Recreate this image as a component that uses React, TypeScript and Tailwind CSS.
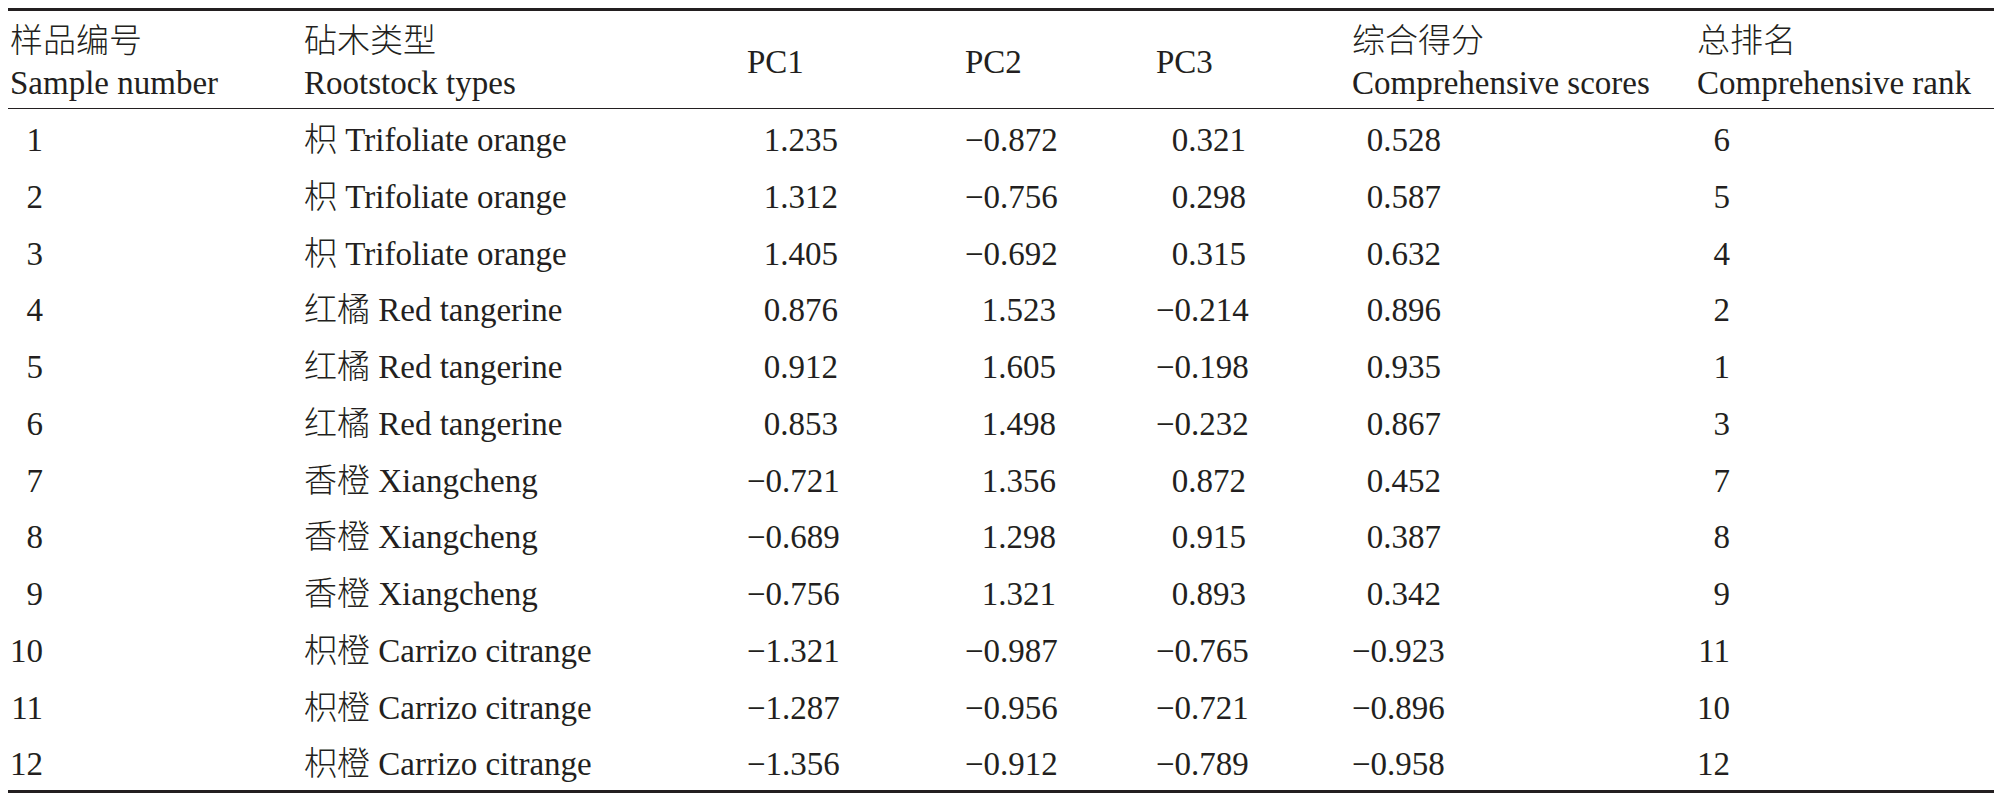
import React from "react"

type Row = {
  no: number
  zh: string
  en: string
  pc1: string
  pc2: string
  pc3: string
  score: string
  rank: number
}

const rows: Row[] = [
  { no: 1, zh: "枳", en: "Trifoliate orange", pc1: "1.235", pc2: "−0.872", pc3: "0.321", score: "0.528", rank: 6 },
  { no: 2, zh: "枳", en: "Trifoliate orange", pc1: "1.312", pc2: "−0.756", pc3: "0.298", score: "0.587", rank: 5 },
  { no: 3, zh: "枳", en: "Trifoliate orange", pc1: "1.405", pc2: "−0.692", pc3: "0.315", score: "0.632", rank: 4 },
  { no: 4, zh: "红橘", en: "Red tangerine", pc1: "0.876", pc2: "1.523", pc3: "−0.214", score: "0.896", rank: 2 },
  { no: 5, zh: "红橘", en: "Red tangerine", pc1: "0.912", pc2: "1.605", pc3: "−0.198", score: "0.935", rank: 1 },
  { no: 6, zh: "红橘", en: "Red tangerine", pc1: "0.853", pc2: "1.498", pc3: "−0.232", score: "0.867", rank: 3 },
  { no: 7, zh: "香橙", en: "Xiangcheng", pc1: "−0.721", pc2: "1.356", pc3: "0.872", score: "0.452", rank: 7 },
  { no: 8, zh: "香橙", en: "Xiangcheng", pc1: "−0.689", pc2: "1.298", pc3: "0.915", score: "0.387", rank: 8 },
  { no: 9, zh: "香橙", en: "Xiangcheng", pc1: "−0.756", pc2: "1.321", pc3: "0.893", score: "0.342", rank: 9 },
  { no: 10, zh: "枳橙", en: "Carrizo citrange", pc1: "−1.321", pc2: "−0.987", pc3: "−0.765", score: "−0.923", rank: 11 },
  { no: 11, zh: "枳橙", en: "Carrizo citrange", pc1: "−1.287", pc2: "−0.956", pc3: "−0.721", score: "−0.896", rank: 10 },
  { no: 12, zh: "枳橙", en: "Carrizo citrange", pc1: "−1.356", pc2: "−0.912", pc3: "−0.789", score: "−0.958", rank: 12 },
]

// column starts: 10, 304, 747, 965, 1156, 1352, 1697
const grid = "grid grid-cols-[294px_443px_218px_191px_196px_345px_1fr] pl-[2px]"

function Cjk({ children }: { children: React.ReactNode }) {
  return <span className="font-light">{children}</span>
}

function HeaderCell({ zh, en }: { zh: string; en: string }) {
  return (
    <div className="whitespace-nowrap">
      <div className="h-[42px] leading-[42px]">
        <Cjk>{zh}</Cjk>
      </div>
      <div className="h-[42px] leading-[42px]">{en}</div>
    </div>
  )
}

function HeaderPC({ label }: { label: string }) {
  return (
    <div className="flex items-center whitespace-nowrap">
      <span className="leading-[42px]">{label}</span>
    </div>
  )
}

export default function App() {
  return (
    <div className="min-h-[801px] w-[2000px] bg-white pt-[8px] font-['Liberation_Serif','Noto_Sans_CJK_SC',serif] text-[33px] text-[#231f20]">
      <div className="ml-[8px] w-[1986px] border-y-[3px] border-[#231f20]">
        <div className={`${grid} border-b-[1.5px] border-[#231f20] pt-[9px] pb-[4px]`}>
          <HeaderCell zh="样品编号" en="Sample number" />
          <HeaderCell zh="砧木类型" en="Rootstock types" />
          <HeaderPC label="PC1" />
          <HeaderPC label="PC2" />
          <HeaderPC label="PC3" />
          <HeaderCell zh="综合得分" en="Comprehensive scores" />
          <HeaderCell zh="总排名" en="Comprehensive rank" />
        </div>

        <div>
          {rows.map((r) => (
            <div key={r.no} className={`${grid} h-[56.75px] pt-[3px] leading-[56.75px] whitespace-nowrap`}>
              <div>
                <span className="inline-block w-[33px] text-right">{r.no}</span>
              </div>
              <div>
                <Cjk>{r.zh}</Cjk> {r.en}
              </div>
              <div>
                <span className="inline-block w-[91px] text-right">{r.pc1}</span>
              </div>
              <div>
                <span className="inline-block w-[91px] text-right">{r.pc2}</span>
              </div>
              <div>
                <span className="inline-block w-[90px] text-right">{r.pc3}</span>
              </div>
              <div>
                <span className="inline-block w-[89px] text-right">{r.score}</span>
              </div>
              <div>
                <span className="inline-block w-[33px] text-right">{r.rank}</span>
              </div>
            </div>
          ))}
        </div>
      </div>
    </div>
  )
}
